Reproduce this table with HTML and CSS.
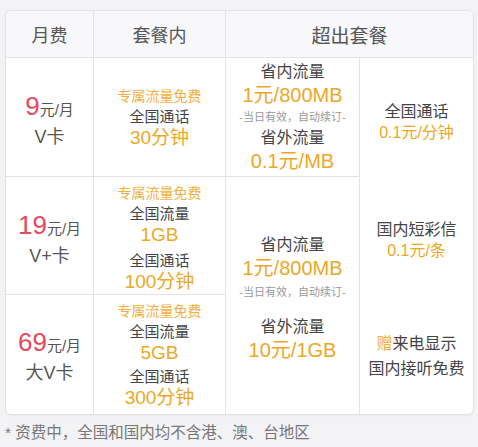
FILE: index.html
```html
<!DOCTYPE html>
<html lang="zh-CN">
<head>
<meta charset="utf-8">
<link rel="stylesheet" href="styles.css">
</head>
<body>
<div class="card">
  <div class="grid">
    <div class="hd hd1">月费</div>
    <div class="hd hd2">套餐内</div>
    <div class="hd hd3">超出套餐</div>

    <div class="cell c1 r1 shift"><div class="price"><span class="num">9</span><span class="unit">元/月</span></div><div class="name">V卡</div></div>
    <div class="cell c2 r1">
      <div class="tag">专属流量免费</div>
      <div class="lbl">全国通话</div>
      <div class="big">30分钟</div>
    </div>
    <div class="cell c3 r1">
      <div class="lbl3">省内流量</div>
      <div class="big3">1元/800MB</div>
      <div class="note">-当日有效，自动续订-</div>
      <div class="lbl3">省外流量</div>
      <div class="big3">0.1元/MB</div>
    </div>
    <div class="cell4 c4 r1">
      <div class="lbl4">全国通话</div>
      <div class="val4">0.1元/分钟</div>
    </div>

    <div class="cell c1 r2 shift"><div class="price"><span class="num">19</span><span class="unit">元/月</span></div><div class="name">V+卡</div></div>
    <div class="cell c2 r2 shift">
      <div class="tag">专属流量免费</div>
      <div class="lbl">全国流量</div>
      <div class="big">1GB</div>
      <div class="lbl gap5">全国通话</div>
      <div class="big">100分钟</div>
    </div>
    <div class="cell c3 r23">
      <div class="lbl3">省内流量</div>
      <div class="big3">1元/800MB</div>
      <div class="note note2">-当日有效，自动续订-</div>
      <div class="lbl3">省外流量</div>
      <div class="big3">10元/1GB</div>
    </div>
    <div class="cell4 c4 r2">
      <div class="lbl4">国内短彩信</div>
      <div class="val4">0.1元/条</div>
    </div>

    <div class="cell c1 r3 last"><div class="price"><span class="num">69</span><span class="unit">元/月</span></div><div class="name">大V卡</div></div>
    <div class="cell c2 r3 last">
      <div class="tag">专属流量免费</div>
      <div class="lbl">全国流量</div>
      <div class="big">5GB</div>
      <div class="lbl gap3">全国通话</div>
      <div class="big">300分钟</div>
    </div>
    <div class="cell4 c4 r3 last">
      <div class="lbl4 lh25"><span class="hl">赠</span>来电显示</div>
      <div class="lbl4 lh25">国内接听免费</div>
    </div>
  </div>
</div>
<div class="foot">* 资费中，全国和国内均不含港、澳、台地区</div>
</body>
</html>
```
FILE: styles.css
```css
html, body {
  margin: 0;
  padding: 0;
  background: #f3f3f6;
}
body {
  font-family: "Liberation Sans", "Noto Sans CJK SC", sans-serif;
  width: 478px;
  height: 447px;
  overflow: hidden;
}
.card {
  margin: 10px 4px 0 5px;
  width: 469px;
  box-sizing: border-box;
  border: 1px solid #e2e2e6;
  border-radius: 6px;
  background: #fff;
  overflow: hidden;
  box-shadow: 0 1px 2px rgba(0,0,0,0.04);
}
.grid {
  display: grid;
  grid-template-columns: 88px 132px 134px 113px;
  grid-template-rows: 47px 119px 118px 119px;
}
.hd {
  background: #f8f8fa;
  border-bottom: 1px solid #e3e3e6;
  color: #555;
  font-size: 18px;
  display: flex;
  align-items: center;
  justify-content: center;
  grid-row: 1;
}
.hd1 { grid-column: 1; border-right: 1px solid #e3e3e6; }
.hd2 { grid-column: 2; border-right: 1px solid #e3e3e6; }
.hd3 { grid-column: 3 / span 2; font-size: 19px; }

.cell {
  display: flex;
  flex-direction: column;
  align-items: center;
  justify-content: center;
  border-right: 1px solid #e3e3e6;
  border-bottom: 1px solid #e3e3e6;
  text-align: center;
}
.cell.last { border-bottom: none; }
.cell4 {
  display: flex;
  flex-direction: column;
  align-items: center;
  justify-content: center;
  text-align: center;
}
.c1 { grid-column: 1; }
.c2 { grid-column: 2; }
.c3 { grid-column: 3; }
.c4 { grid-column: 4; }
.r1 { grid-row: 2; }
.r2 { grid-row: 3; }
.r3 { grid-row: 4; }
.r23 { grid-row: 3 / span 2; border-bottom: none; padding-top: 4px; }
.shift { padding-top: 4px; }
.c4.r1 { padding-top: 9px; }
.c4.r2 { padding-top: 7px; }
.c4.r3 { padding-top: 2px; }

.price { line-height: 30px; padding-top: 2px; }
.num { color: #e8475c; font-size: 26px; }
.unit { color: #555; font-size: 15px; }
.name { color: #555; font-size: 18px; line-height: 24px; }

.tag { color: #f0b040; font-size: 14px; line-height: 22px; }
.lbl { color: #444; font-size: 15px; line-height: 20px; }
.big { color: #eba826; font-size: 19px; line-height: 22px; }
.gap5 { margin-top: 5px; }
.gap3 { margin-top: 3px; }

.lbl3 { color: #444; font-size: 16px; line-height: 22px; }
.big3 { color: #eba826; font-size: 20px; line-height: 24px; }
.note { color: #9a9a9a; font-size: 11px; line-height: 20px; }
.note2 { margin-top: 2px; margin-bottom: 14px; }

.lbl4 { color: #444; font-size: 16px; line-height: 21px; }
.val4 { color: #eba826; font-size: 16px; line-height: 21px; }
.lh25 { line-height: 25px; }
.hl { color: #f0b040; }

.foot {
  margin: 8px 0 0 5px;
  color: #777;
  font-size: 15.5px;
  line-height: 20px;
}
```
